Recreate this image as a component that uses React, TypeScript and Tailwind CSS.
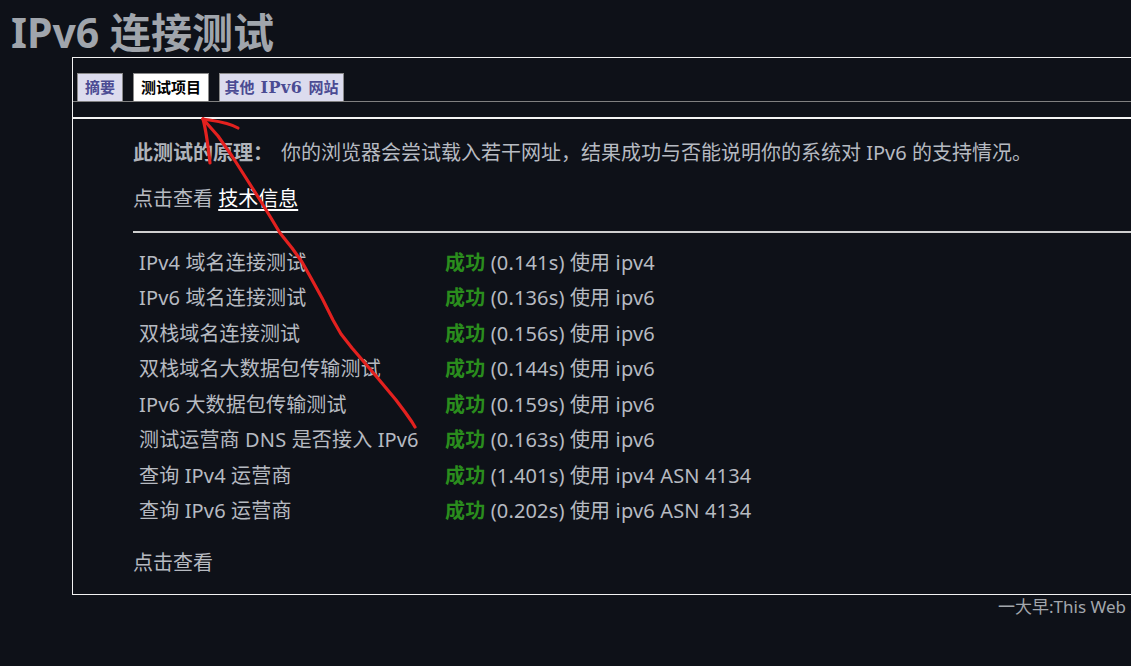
import React from "react";

const rows: [string, string, string][] = [
  ["IPv4 域名连接测试", "(0.141s)", "使用 ipv4"],
  ["IPv6 域名连接测试", "(0.136s)", "使用 ipv6"],
  ["双栈域名连接测试", "(0.156s)", "使用 ipv6"],
  ["双栈域名大数据包传输测试", "(0.144s)", "使用 ipv6"],
  ["IPv6 大数据包传输测试", "(0.159s)", "使用 ipv6"],
  ["测试运营商 DNS 是否接入 IPv6", "(0.163s)", "使用 ipv6"],
  ["查询 IPv4 运营商", "(1.401s)", "使用 ipv4 ASN 4134"],
  ["查询 IPv6 运营商", "(0.202s)", "使用 ipv6 ASN 4134"],
];

export default function App() {
  return (
    <div
      className="relative min-h-screen w-full overflow-hidden bg-[#0e1118] text-[#b6bac1]"
      style={{ fontFamily: '"Noto Sans", "Noto Sans CJK SC", sans-serif' }}
    >
      <h1 className="h-[57px] whitespace-nowrap pl-[11px] pt-[7px] text-[41px] font-bold leading-[50px] text-[#a0a5ac]">
        IPv6 连接测试
      </h1>

      <div className="ml-[72px] w-[1200px] border border-[#f2f2f2]">
        <div className="flex gap-[10px] border-b border-[#808080] pl-[4px] pt-[15px]">
          <div className="flex h-[28px] w-[46px] items-center justify-center border border-b-0 border-[#8a8a8a] bg-[#dcdcee] text-[15px] font-bold text-[#4b4b93]">
            摘要
          </div>
          <div className="flex h-[28px] w-[76px] items-center justify-center border border-b-0 border-[#8a8a8a] bg-white text-[15px] font-bold text-black">
            测试项目
          </div>
          <div className="flex h-[28px] w-[125px] items-center justify-center whitespace-nowrap border border-b-0 border-[#8a8a8a] bg-[#dcdcee] text-[15px] font-bold text-[#4b4b93]">
            其他
            <span
              className="mx-[6px] text-[16px] tracking-[0.5px]"
              style={{ fontFamily: '"DejaVu Serif", "Liberation Serif", serif' }}
            >
              IPv6
            </span>
            网站
          </div>
        </div>
        <div className="mt-[15px] h-[2px] bg-[#f4f4f4]" />

        <div className="pl-[60px] pb-[16px] text-[20px] leading-[30px]">
          <p className="mt-[19px] whitespace-nowrap">
            <span className="font-bold text-[#b0b4bb]">此测试的原理：</span>
            <span className="ml-[8px]">
              你的浏览器会尝试载入若干网址，结果成功与否能说明你的系统对 IPv6 的支持情况。
            </span>
          </p>
          <p className="mt-[16px] whitespace-nowrap">
            点击查看{" "}
            <a className="text-white underline underline-offset-[3px]" href="#">
              技术信息
            </a>
          </p>
          <div className="mt-[17px] h-[2px] bg-[#cfcfcf]" />

          <div className="mt-[12px] pl-[6px] tracking-[0.15px]">
            {rows.map(([name, time, use]) => (
              <div
                key={name}
                className="grid h-[35.5px] grid-cols-[306px_1fr] items-center whitespace-nowrap"
              >
                <span>{name}</span>
                <span>
                  <span className="font-bold text-[#2a8d1d]">成功</span> {time} {use}
                </span>
              </div>
            ))}
          </div>

          <p className="mt-[19px]">点击查看</p>
        </div>
      </div>

      <div className="ml-[998px] whitespace-nowrap text-[17px] leading-[24px] text-[#a3a7ad]">
        一大早:This Web Site is a tool to test IPv6 connectivity
      </div>

      <svg
        className="pointer-events-none absolute left-0 top-0"
        width="1131"
        height="666"
        viewBox="0 0 1131 666"
        fill="none"
      >
        <path
          d="M203 119 L218 136 L232 156 L246 178 L260 200 L271 218 L280 233 L292 248 L302 262 L311 278 L322 298 L333 320 L341 334 L352 348 L364 362 L376 376 L386 388 L396 400 L405 412 L412 422 L415 427"
          stroke="#e3211f"
          strokeWidth="3.2"
          strokeLinecap="round"
          strokeLinejoin="round"
        />
        <path
          d="M203 119 C 215 121, 228 122, 238 128"
          stroke="#e3211f"
          strokeWidth="3.2"
          strokeLinecap="round"
        />
        <path
          d="M203 119 C 206 130, 208 145, 210 163"
          stroke="#e3211f"
          strokeWidth="3.2"
          strokeLinecap="round"
        />
      </svg>
    </div>
  );
}
